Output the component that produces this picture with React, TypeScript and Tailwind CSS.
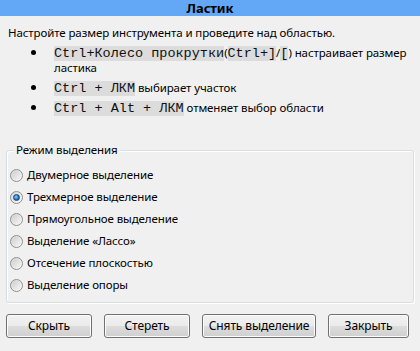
import React from 'react';

const modes = [
  'Двумерное выделение',
  'Трехмерное выделение',
  'Прямоугольное выделение',
  'Выделение «Лассо»',
  'Отсечение плоскостью',
  'Выделение опоры',
];

const Code: React.FC<{ children: React.ReactNode }> = ({ children }) => (
  <span className="bg-[#dcdcdc] font-['Liberation_Mono',monospace] text-[13.5px] leading-none tracking-normal text-[#111]">{children}</span>
);

const Radio: React.FC<{ checked?: boolean }> = ({ checked }) => (
  <span className="flex h-[13px] w-[13px] shrink-0 items-center justify-center rounded-full border border-[#8e8f8f] bg-gradient-to-br from-[#d6d6d6] to-[#fbfbfb]">
    {checked ? (
      <span className="h-[7px] w-[7px] rounded-full border border-[#1a4a7a] bg-[radial-gradient(circle_at_40%_40%,#8fd0ff,#1b6fb8_60%,#0d3f70)]" />
    ) : (
      <span className="h-[9px] w-[9px] rounded-full bg-gradient-to-br from-[#cfcfcf] to-[#f6f6f6]" />
    )}
  </span>
);

const Button: React.FC<{ label: string; width: string }> = ({ label, width }) => (
  <button
    className={`${width} h-[24px] rounded-[3px] border border-[#707070] bg-[linear-gradient(#f2f2f2_0%,#ebebeb_50%,#dddddd_51%,#cfcfcf_100%)] text-[12px] text-black shadow-[inset_0_0_0_1px_#fcfcfc]`}
  >
    {label}
  </button>
);

const Bullet = () => <span className="absolute left-[-23px] top-[5px] h-[5px] w-[5px] rounded-full bg-black" />;

const App: React.FC = () => {
  return (
    <div className="flex h-[351px] w-[420px] flex-col bg-[#f0f0f0] font-['Noto_Sans',sans-serif] text-[11.5px] tracking-[-0.1px] text-black">
      <div className="h-[16px] shrink-0 bg-[#62a8f7] text-center text-[13px] font-bold leading-[16px]">Ластик</div>

      <div className="h-[99px] shrink-0 px-[8px] pt-[9px]">
        <p className="h-[16px] leading-[16px]">Настройте размер инструмента и проведите над областью.</p>
        <ul className="mt-[4px] flex flex-col gap-[5px] pl-[46px] leading-[15px]">
          <li className="relative h-[30px]">
            <Bullet />
            <div className="h-[15px] whitespace-nowrap">
              <Code>Ctrl+Колесо прокрутки</Code>(<Code>Ctrl+]</Code>/<Code>[</Code>) настраивает размер
            </div>
            <div className="h-[15px]">ластика</div>
          </li>
          <li className="relative h-[15px]">
            <Bullet />
            <Code>Ctrl + ЛКМ</Code> выбирает участок
          </li>
          <li className="relative h-[15px]">
            <Bullet />
            <Code>Ctrl + Alt + ЛКМ</Code> отменяет выбор области
          </li>
        </ul>
      </div>

      <div className="mx-[6px] mt-[35px] flex h-[153px] w-[408px] shrink-0 flex-col rounded-[3px] border border-[#d5dfe5] pl-[3px] shadow-[inset_1px_1px_0_#ffffff,1px_1px_0_#ffffff]">
        <span className="-mt-[9px] ml-[4px] h-[16px] w-fit bg-[#f0f0f0] px-[2px] leading-[16px]">Режим выделения</span>
        <div className="mt-[9px] flex flex-col gap-[6px]">
          {modes.map((m, i) => (
            <label key={m} className="flex h-[16px] items-center gap-[4px] leading-[16px]">
              <Radio checked={i === 1} />
              <span>{m}</span>
            </label>
          ))}
        </div>
      </div>

      <div className="mt-[11px] flex gap-[12px] px-[6px]">
        <Button label="Скрыть" width="w-[86px]" />
        <Button label="Стереть" width="w-[86px]" />
        <Button label="Снять выделение" width="w-[114px]" />
        <Button label="Закрыть" width="w-[81px]" />
      </div>
    </div>
  );
};

export default App;
